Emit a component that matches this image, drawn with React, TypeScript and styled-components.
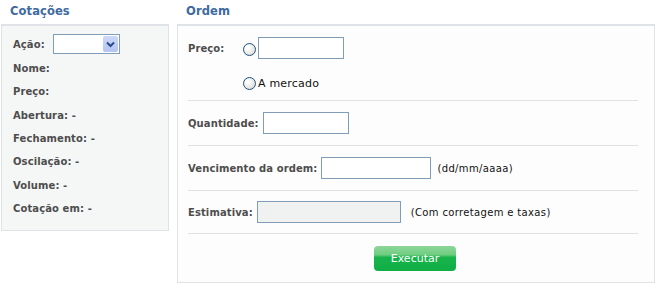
import styled, { createGlobalStyle } from "styled-components";

const GlobalStyle = createGlobalStyle`
  body {
    margin: 0;
    background: #ffffff;
    font-family: "DejaVu Sans", Verdana, sans-serif;
    font-size: 10px;
  }
`;

const quoteFields = [
  "Nome:",
  "Preço:",
  "Abertura: -",
  "Fechamento: -",
  "Oscilação: -",
  "Volume: -",
  "Cotação em: -",
];

const Page = styled.div`
  display: flex;
  align-items: flex-start;
  gap: 8px;
  padding-left: 1px;
  width: 660px;
  height: 300px;
  box-sizing: border-box;
`;

const Column = styled.section<{ $width: number }>`
  display: flex;
  flex-direction: column;
  width: ${(p) => p.$width}px;
`;

const Title = styled.h2`
  margin: 0;
  padding-left: 9px;
  height: 24px;
  color: #3d6aa1;
  font-size: 11.5px;
  font-weight: 700;
  letter-spacing: 0.1px;
  line-height: 22px;
`;

const QuoteBox = styled.div`
  display: flex;
  flex-direction: column;
  height: 207px;
  padding: 6px 11px 0;
  box-sizing: border-box;
  border: 1px solid #dfe2e6;
  border-top: 2px solid #dfe2e6;
  background: #f5f7f7;
`;

const QuoteRow = styled.div<{ $height?: number }>`
  display: flex;
  align-items: center;
  gap: 8px;
  height: ${(p) => p.$height ?? 23.4}px;
  color: #4d4d4d;
  font-weight: 700;
  letter-spacing: 0.1px;
`;

const Select = styled.div`
  display: flex;
  justify-content: flex-end;
  align-items: center;
  width: 67px;
  height: 20px;
  box-sizing: border-box;
  border: 1px solid #7f9db9;
  background: #ffffff;
  padding: 1px;
`;

const SelectButton = styled.div`
  display: flex;
  align-items: center;
  justify-content: center;
  width: 15px;
  height: 16px;
  border-radius: 2px;
  background: linear-gradient(#cbd8f8, #b3c5f2);
`;

const OrderBox = styled.div`
  display: flex;
  flex-direction: column;
  height: 259px;
  padding: 0 16px 0 10px;
  box-sizing: border-box;
  border: 1px solid #dfe2e6;
  border-top: 2px solid #dfe2e6;
  background: #fdfdfd;
`;

const Section = styled.div<{ $top: number; $bottom: number }>`
  display: flex;
  flex-direction: column;
  gap: 12px;
  padding: ${(p) => p.$top}px 0 ${(p) => p.$bottom}px;
  border-bottom: 1px solid #dfe1e5;
`;

const Line = styled.div<{ $indent?: number }>`
  display: flex;
  align-items: center;
  gap: 4px;
  height: 22px;
  padding-left: ${(p) => p.$indent ?? 0}px;
`;

const Label = styled.span<{ $width?: number }>`
  color: #4d4d4d;
  font-weight: 700;
  letter-spacing: 0.1px;
  ${(p) => (p.$width ? `width: ${p.$width}px;` : "")}
`;

const Note = styled.span<{ $gap?: number }>`
  margin-left: ${(p) => p.$gap ?? 2}px;
  color: #111111;
  font-size: 10px;
  letter-spacing: 0.35px;
`;

const RadioText = styled.span`
  color: #111111;
  font-size: 11px;
  letter-spacing: 0.2px;
  margin-top: 2px;
`;

const Radio = styled.span`
  display: inline-block;
  flex: none;
  width: 13px;
  height: 13px;
  margin: 3px -2px 0 0;
  box-sizing: border-box;
  border-radius: 50%;
  border: 1px solid #1c5180;
  background: radial-gradient(circle at 35% 35%, #ffffff 10%, #d8d8d2 90%);
`;

const TextInput = styled.div<{ $width: number; $disabled?: boolean }>`
  flex: none;
  width: ${(p) => p.$width}px;
  height: 22px;
  box-sizing: border-box;
  border: 1px solid #7f9db9;
  background: ${(p) => (p.$disabled ? "#f0f1f1" : "#ffffff")};
`;

const Footer = styled.div`
  display: flex;
  justify-content: center;
  padding-top: 12px;
  margin-right: -4px;
`;

const ExecuteButton = styled.button`
  width: 82px;
  height: 25px;
  padding: 0;
  border: none;
  border-radius: 4px;
  color: #ffffff;
  font-family: "DejaVu Sans", Verdana, sans-serif;
  font-size: 11px;
  background: linear-gradient(
    #8ed69a 0%,
    #6fcd80 35%,
    #19b34c 45%,
    #0fae45 100%
  );
  cursor: pointer;
`;

export default function App() {
  return (
    <>
      <GlobalStyle />
      <Page>
        <Column $width={168}>
          <Title>Cotações</Title>
          <QuoteBox>
            <QuoteRow $height={24}>
              <span>Ação:</span>
              <Select>
                <SelectButton>
                  <svg width="9" height="7" viewBox="0 0 9 7">
                    <path
                      d="M1 1.5 L4.5 5 L8 1.5"
                      stroke="#2c4a86"
                      strokeWidth="2"
                      fill="none"
                    />
                  </svg>
                </SelectButton>
              </Select>
            </QuoteRow>
            {quoteFields.map((f, i) => (
              <QuoteRow key={f} $height={i === 0 ? 24 : undefined}>
                {f}
              </QuoteRow>
            ))}
          </QuoteBox>
        </Column>
        <Column $width={478}>
          <Title>Ordem</Title>
          <OrderBox>
            <Section $top={11} $bottom={7}>
              <Line>
                <Label $width={51}>Preço:</Label>
                <Radio />
                <TextInput $width={86} />
              </Line>
              <Line $indent={55}>
                <Radio />
                <RadioText>A mercado</RadioText>
              </Line>
            </Section>
            <Section $top={11} $bottom={11}>
              <Line>
                <Label>Quantidade:</Label>
                <TextInput $width={86} />
              </Line>
            </Section>
            <Section $top={11} $bottom={11}>
              <Line>
                <Label>Vencimento da ordem:</Label>
                <TextInput $width={110} />
                <Note>(dd/mm/aaaa)</Note>
              </Line>
            </Section>
            <Section $top={10} $bottom={10}>
              <Line>
                <Label>Estimativa:</Label>
                <TextInput $width={144} $disabled />
                <Note $gap={6}>(Com corretagem e taxas)</Note>
              </Line>
            </Section>
            <Footer>
              <ExecuteButton>Executar</ExecuteButton>
            </Footer>
          </OrderBox>
        </Column>
      </Page>
    </>
  );
}
